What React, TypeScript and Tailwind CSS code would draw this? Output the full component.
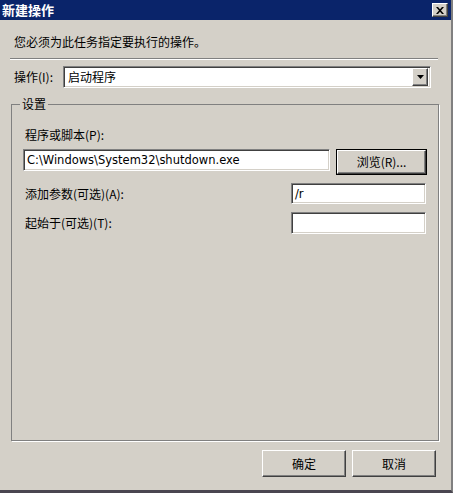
import React from "react";

const cjk = "font-['Noto_Sans_CJK_SC',sans-serif]";

function Raised({ className, children }: { className?: string; children?: React.ReactNode }) {
  return (
    <div
      className={`flex items-center justify-center bg-[#d4d0c8] border border-t-white border-l-white border-r-[#404040] border-b-[#404040] shadow-[inset_-1px_-1px_0_#808080] ${className ?? ""}`}
    >
      {children}
    </div>
  );
}

function Sunken({ className, children }: { className?: string; children?: React.ReactNode }) {
  return (
    <div
      className={`flex items-center bg-white border border-t-[#808080] border-l-[#808080] border-r-white border-b-white shadow-[inset_1px_1px_0_#404040,inset_-1px_-1px_0_#d4d0c8] ${className ?? ""}`}
    >
      {children}
    </div>
  );
}

export default function App() {
  return (
    <div className={`w-[453px] h-[493px] bg-[#d4d0c8] flex flex-col border-r-2 border-r-[#808080] border-b-[3px] border-b-[#4a4650] text-black text-[12px] ${cjk}`}>
      {/* title bar */}
      <div className="h-[20px] bg-[#0a246a] flex items-center justify-between pl-[2px] pr-[3px]">
        <span className="text-white font-bold text-[13px] leading-[16px]">新建操作</span>
        <Raised className="w-[16px] h-[14px]">
          <svg width="8" height="7" viewBox="0 0 8 7">
            <path d="M0 0h2l2 2.2L6 0h2L5 3.5 8 7H6L4 4.8 2 7H0l3-3.5z" fill="#000" />
          </svg>
        </Raised>
      </div>

      <div className="pl-[14px] mt-[14px] leading-[16px]">您必须为此任务指定要执行的操作。</div>

      <div className="ml-[10px] mr-[13px] mt-[8px] h-[2px] border-t border-t-[#808080] border-b border-b-white" />

      {/* operation row */}
      <div className="flex items-center pl-[14px] mt-[6px]">
        <span className="w-[49px] leading-[16px]">操作(I):</span>
        <Sunken className="w-[368px] h-[22px] justify-between pl-[4px] pr-[2px]">
          <span className="leading-[16px]">启动程序</span>
          <Raised className="w-[16px] h-[18px]">
            <svg width="7" height="4" viewBox="0 0 7 4">
              <path d="M0 0h7L3.5 4z" fill="#000" />
            </svg>
          </Raised>
        </Sunken>
      </div>

      {/* settings group */}
      <fieldset className="ml-[11px] mt-[8px] w-[428px] h-[345px] border border-[#808080] shadow-[1px_1px_0_#fff]">
        <legend className="ml-[8px] px-[2px] leading-[16px]">设置</legend>
        <div className="pl-[11px] pt-[15px]">
          <div className="pl-[2px] leading-[16px]">程序或脚本(P):</div>
          <div className="flex items-start gap-[6px] mt-[6px]">
            <Sunken className="w-[307px] h-[22px] pl-[3px]">
              <span className="font-['DejaVu_Sans',sans-serif] text-[11.5px] leading-[16px]">C:\Windows\System32\shutdown.exe</span>
            </Sunken>
            <div className="w-[91px] h-[26px] border border-black flex">
              <Raised className="flex-1">
                <span className="leading-[16px]">浏览(R)...</span>
              </Raised>
            </div>
          </div>
          <div className="flex items-center mt-[8px]">
            <span className="w-[268px] pl-[2px] leading-[16px]">添加参数(可选)(A):</span>
            <Sunken className="w-[135px] h-[21px] pl-[3px]">
              <span className="font-['DejaVu_Sans',sans-serif] text-[11.5px] leading-[16px]">/r</span>
            </Sunken>
          </div>
          <div className="flex items-center mt-[8px]">
            <span className="w-[268px] pl-[2px] leading-[16px]">起始于(可选)(T):</span>
            <Sunken className="w-[135px] h-[22px]" />
          </div>
        </div>
      </fieldset>

      {/* bottom buttons */}
      <div className="flex justify-end gap-[6px] pr-[15px] mt-[9px]">
        <Raised className="w-[84px] h-[27px]">
          <span className="leading-[16px]">确定</span>
        </Raised>
        <Raised className="w-[84px] h-[27px]">
          <span className="leading-[16px]">取消</span>
        </Raised>
      </div>
    </div>
  );
}
